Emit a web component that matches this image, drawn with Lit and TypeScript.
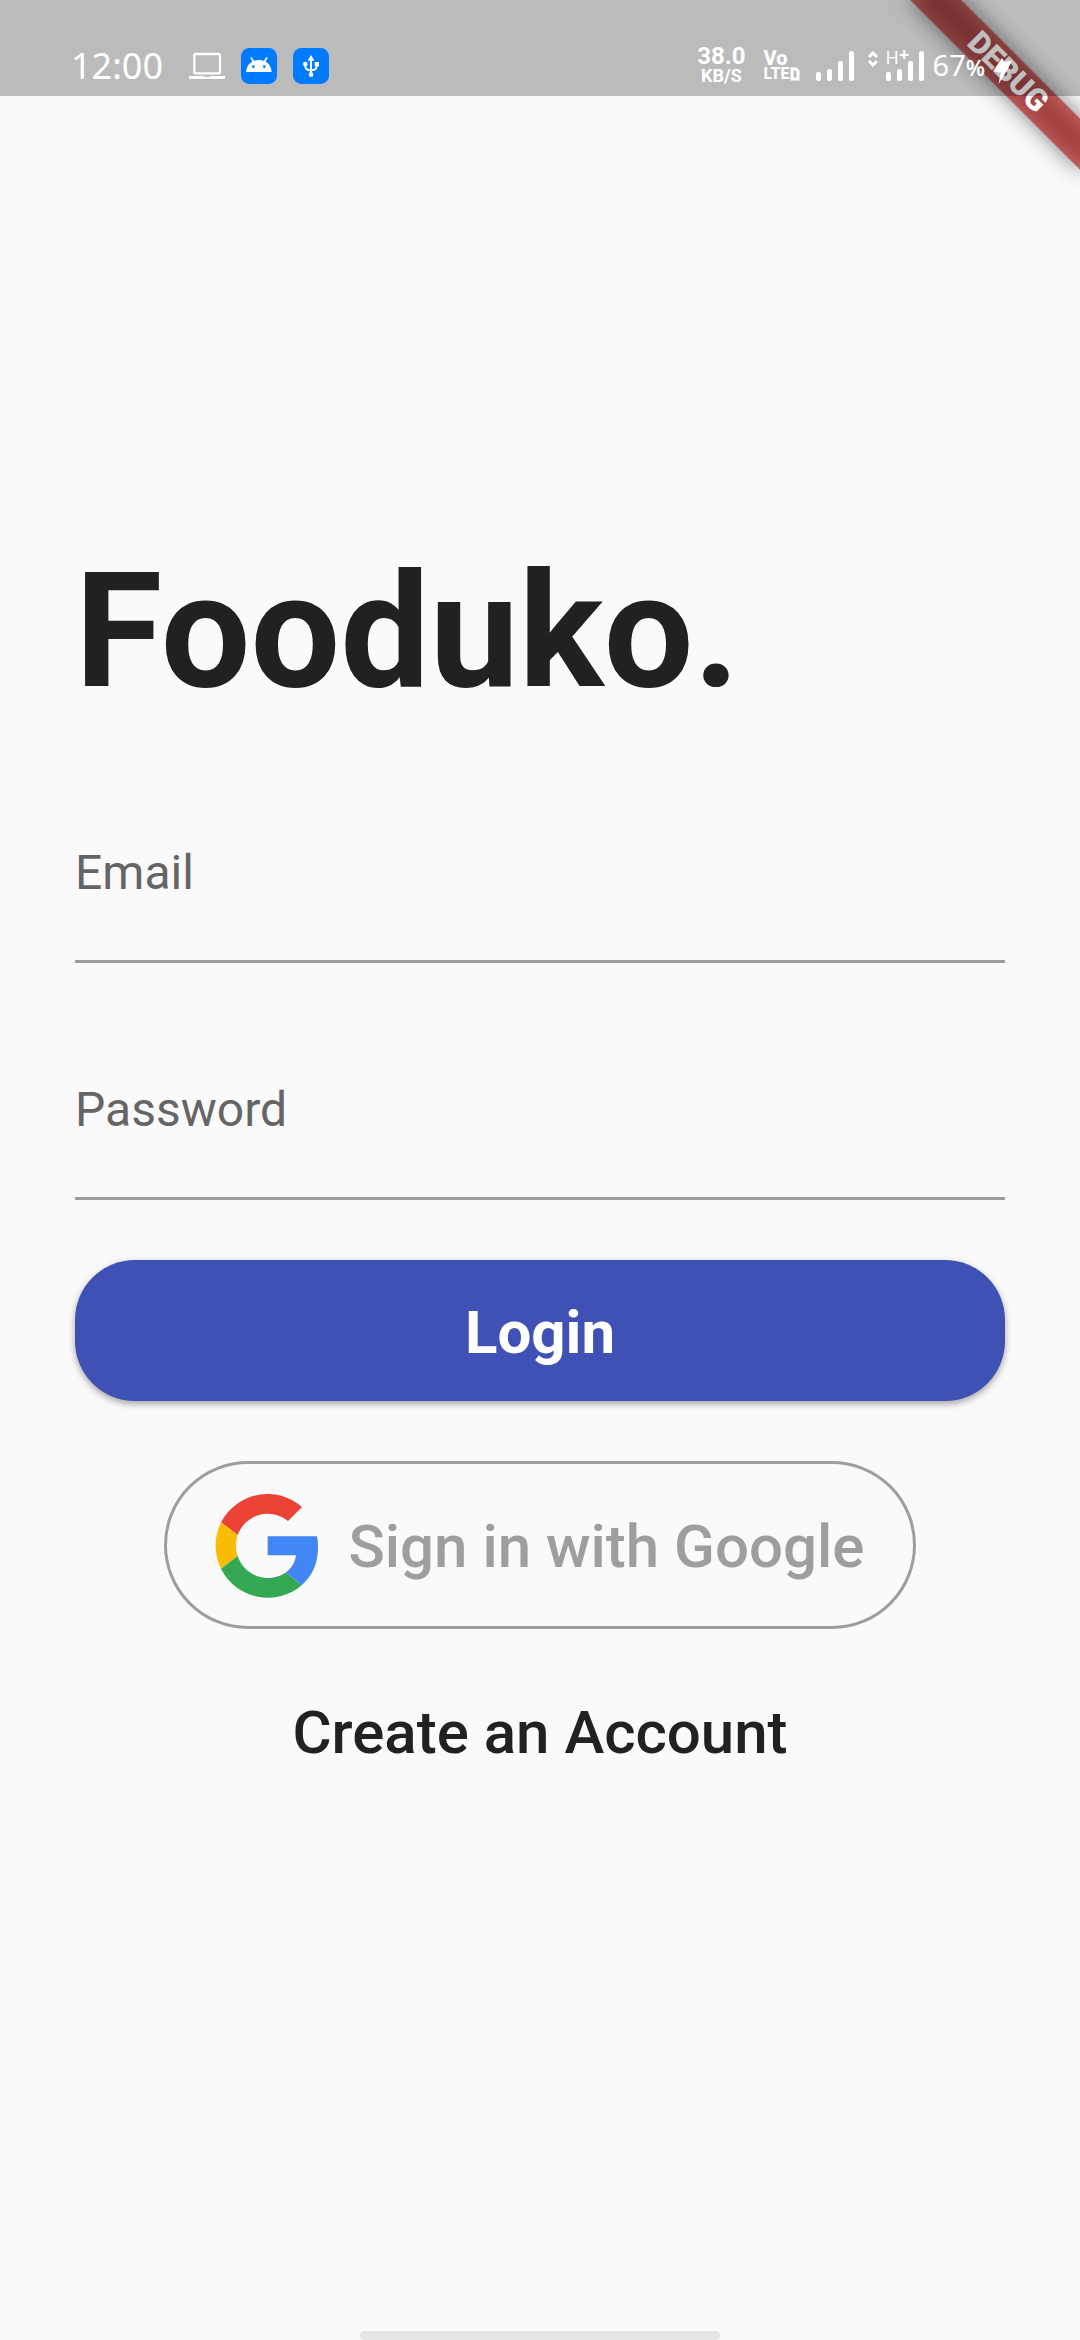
import { LitElement, html, css, svg } from "lit";
import { customElement, property, state } from "lit/decorators.js";

@customElement("signal-bars")
class SignalBars extends LitElement {
  static styles = css`
    :host { display: block; width: 38px; height: 30px; }
    svg { display: block; width: 38px; height: 30px; fill: #fff; }
  `;

  @property({ type: Array }) heights: number[] = [9, 12, 20, 30];

  render() {
    return html`<svg viewBox="0 0 38 30" aria-hidden="true">
      ${this.heights.map(
        (h, i) => svg`<rect x=${i * 11} y=${30 - h} width="5" height=${h} rx="2"></rect>`
      )}
    </svg>`;
  }
}

@customElement("status-bar")
class StatusBar extends LitElement {
  static styles = css`
    :host {
      display: flex;
      justify-content: space-between;
      align-items: center;
      box-sizing: border-box;
      height: 96px;
      padding: 36px 68px 0 71px;
      background: rgba(0, 0, 0, 0.25);
      color: #fff;
      font-family: "Noto Sans", "Open Sans", sans-serif;
      white-space: nowrap;
    }
    svg { display: block; }
    .side { display: flex; align-items: center; }
    .notices { gap: 16px; }
    .time { font-size: 36px; line-height: 48px; margin-right: 10px; }
    .notice { width: 36px; height: 36px; }
    .speed {
      display: grid;
      justify-items: center;
      font: 700 24px/20px Roboto, sans-serif;
      margin-right: 18px;
    }
    .unit { font-size: 18px; line-height: 20px; }
    .volte {
      display: grid;
      font: 800 20px/16px Roboto, sans-serif;
      margin-right: 16px;
    }
    .lte { display: flex; align-items: center; font-size: 16px; }
    .slot { width: 10px; height: 14px; }
    .arrows { width: 10px; height: 16px; margin: 0 8px 14px 14px; }
    .cell { display: grid; }
    .cell > * { grid-area: 1 / 1; }
    .kind { display: flex; align-items: flex-start; font-size: 18px; line-height: 12px; }
    .plus { font-size: 18px; line-height: 6px; font-weight: 700; }
    .level { display: flex; align-items: baseline; font-size: 29px; line-height: 36px; margin-left: 9px; }
    .percent { font-size: 22px; font-weight: 600; }
    .bolt { width: 19px; height: 26px; margin: 10px 0 0 8px; }
  `;

  render() {
    return html`
      <div class="side notices">
        <span class="time">12:00</span>
        <svg class="notice" viewBox="0 0 108 108" aria-hidden="true">
          <rect x="16" y="18" width="77" height="58" rx="4" fill="none" stroke="#fff" stroke-width="7"></rect>
          <path d="M0 84H44L48 87H62L66 84H108V90Q108 93 105 93H3Q0 93 0 90Z" fill="#fff"></path>
        </svg>
        <svg class="notice" viewBox="0 0 108 108" aria-hidden="true">
          <rect width="108" height="108" rx="25" fill="#007aff"></rect>
          <path d="M15 72C17 48 34 36 54 36S90 48 92 72Z" fill="#fff"></path>
          <path d="M30 28L38 42M78 28L70 42" stroke="#fff" stroke-width="5"></path>
          <circle cx="37" cy="56" r="4" fill="#007aff"></circle>
          <circle cx="70" cy="56" r="4" fill="#007aff"></circle>
        </svg>
        <svg class="notice" viewBox="0 0 108 108" aria-hidden="true">
          <rect width="108" height="108" rx="25" fill="#007aff"></rect>
          <path d="M54 20L64 38H44Z" fill="#fff"></path>
          <path d="M54 34V80M37 49V54Q37 67 54 67Q71 67 71 54V49" fill="none" stroke="#fff" stroke-width="6"></path>
          <circle cx="54" cy="80" r="7" fill="#fff"></circle>
          <circle cx="37" cy="48" r="7" fill="#fff"></circle>
          <rect x="65" y="42" width="13" height="13" fill="#fff"></rect>
        </svg>
      </div>
      <div class="side">
        <span class="speed"><span>38.0</span><span class="unit">KB/S</span></span>
        <span class="volte">
          <span>Vo</span>
          <span class="lte">LTE
            <svg class="slot" viewBox="0 0 10 14" aria-hidden="true">
              <path d="M2 2H6L8 4V12H2Z" fill="none" stroke="#fff" stroke-width="3"></path>
            </svg>
          </span>
        </span>
        <signal-bars></signal-bars>
        <svg class="arrows" viewBox="0 0 10 16" fill="none" stroke="#fff" stroke-width="3" aria-hidden="true">
          <path d="M1 6L5 2L9 6M1 10L5 14L9 10"></path>
        </svg>
        <span class="cell">
          <signal-bars></signal-bars>
          <span class="kind">H<span class="plus">+</span></span>
        </span>
        <span class="level">67<span class="percent">%</span></span>
        <svg class="bolt" viewBox="457 172 56 78" aria-hidden="true">
          <path d="M483 172L491 184L513 180L501 206L473 250L480 216L457 212Z" fill="#fff"></path>
        </svg>
      </div>
    `;
  }
}

@customElement("text-field")
class TextField extends LitElement {
  static styles = css`
    :host { display: block; }
    .field {
      display: grid;
      align-items: center;
      box-sizing: border-box;
      height: 177px;
      border-bottom: 3px solid #9e9e9e;
      font: 400 48px/56px Roboto, sans-serif;
    }
    .field > * { grid-area: 1 / 1; }
    .name { color: #656565; pointer-events: none; z-index: 1; }
    .filled .name { align-self: start; font-size: 36px; }
    .box {
      width: 100%;
      height: 100%;
      box-sizing: border-box;
      padding: 0;
      border: 0;
      outline: 0;
      background: none;
      color: #212121;
      font: inherit;
    }
    .field:focus-within { border-color: #3f51b5; }
  `;

  @property() label = "";
  @property() type = "text";
  @state() private value = "";

  render() {
    return html`<div class=${this.value ? "field filled" : "field"}>
      <label class="name" for="box">${this.label}</label>
      <input
        class="box"
        id="box"
        type=${this.type}
        .value=${this.value}
        @input=${(e: Event) => (this.value = (e.target as HTMLInputElement).value)}
      />
    </div>`;
  }
}

@customElement("debug-banner")
class DebugBanner extends LitElement {
  static styles = css`
    :host {
      display: block;
      position: relative;
      overflow: hidden;
      width: 240px;
      height: 240px;
    }
    .ribbon {
      position: absolute;
      top: 84px;
      right: -120px;
      width: 240px;
      height: 36px;
      transform: rotate(45deg);
      transform-origin: 120px -84px;
      font: 900 31px/36px Roboto, sans-serif;
      text-align: center;
      color: #fff;
    }
    .shade, .band { position: absolute; inset: 0; }
    .shade { background: rgba(0, 0, 0, 0.5); filter: blur(11px); }
    .band { background: rgba(183, 28, 28, 0.63); }
  `;

  render() {
    return html`<div class="ribbon">
      <div class="shade"></div>
      <div class="band">DEBUG</div>
    </div>`;
  }
}

@customElement("app-root")
class AppRoot extends LitElement {
  static styles = css`
    :host { display: block; background: #fafafa; }
    .screen {
      display: grid;
      grid-template-columns: minmax(0, 1fr);
      min-height: 100vh;
      font-family: Roboto, sans-serif;
    }
    .screen > * { grid-area: 1 / 1; }
    .bar { align-self: start; z-index: 2; }
    .debug { align-self: start; justify-self: end; z-index: 1; }
    .home {
      align-self: end;
      justify-self: center;
      width: 33.333%;
      height: 9px;
      border-radius: 5px;
      background: #e5e5e5;
    }
    .form {
      display: flex;
      flex-direction: column;
      justify-content: center;
      gap: 60px;
      padding: 0 75px;
    }
    .title {
      margin: 0;
      font-size: 159px;
      line-height: 189px;
      font-weight: 700;
      color: #212121;
    }
    .login, .google, .create {
      box-sizing: border-box;
      font: 500 60px/70px Roboto, sans-serif;
      cursor: pointer;
    }
    .text { display: block; padding-top: 4px; }
    .login {
      height: 141px;
      padding: 0;
      border: 0;
      border-radius: 60px;
      background: #3f51b5;
      color: #fff;
      font-weight: 700;
      box-shadow: 0 3px 6px rgba(0, 0, 0, 0.26), 0 3px 9px rgba(0, 0, 0, 0.1);
    }
    .others { display: flex; flex-direction: column; align-items: center; gap: 30px; }
    .google {
      display: flex;
      align-items: center;
      gap: 28px;
      height: 168px;
      padding: 0 48px;
      border: 3px solid #9e9e9e;
      border-radius: 84px;
      background: none;
      color: #9e9e9e;
    }
    .logo { width: 105px; height: 105px; }
    .create {
      display: flex;
      align-items: center;
      height: 144px;
      color: #212121;
      text-decoration: none;
    }
  `;

  render() {
    return html`<div class="screen">
      <form class="form" @submit=${(e: Event) => e.preventDefault()}>
        <h1 class="title">Fooduko.</h1>
        <text-field label="Email" type="email"></text-field>
        <text-field label="Password" type="password"></text-field>
        <button class="login" type="submit"><span class="text">Login</span></button>
        <div class="others">
          <button class="google" type="button">
            <svg class="logo" viewBox="192 158 315 315" aria-hidden="true">
              <path fill="#ea4335" d="M453 200A157 157 0 0 0 210 246L260 284A96 96 0 0 1 411 242Z"></path>
              <path fill="#fbbc05" d="M210 246A157 157 0 0 0 210 385L260 347A96 96 0 0 1 260 284Z"></path>
              <path fill="#34a853" d="M210 385A157 157 0 0 0 453 434L404 397A96 96 0 0 1 260 347Z"></path>
              <path fill="#4285f4" d="M350 288H498Q501 302 501 320C501 370 484 406 453 434L404 397C420 386 432 368 435 345H350Z"></path>
            </svg>
            <span class="text">Sign in with Google</span>
          </button>
          <a class="create" href="#register"><span class="text">Create an Account</span></a>
        </div>
      </form>
      <debug-banner class="debug"></debug-banner>
      <status-bar class="bar"></status-bar>
      <div class="home"></div>
    </div>`;
  }
}
